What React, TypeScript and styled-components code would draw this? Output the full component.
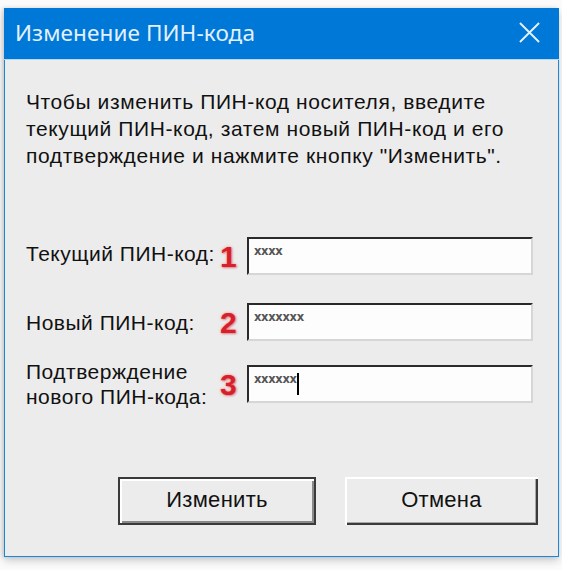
import React from "react";
import styled, { createGlobalStyle } from "styled-components";

const Global = createGlobalStyle`
  html, body { margin: 0; padding: 0; background: #fbfbfb; }
  body { width: 562px; height: 570px; overflow: hidden; }
`;

const Page = styled.div`
  width: 562px;
  height: 570px;
  padding: 8px 0 0 4px;
  box-sizing: border-box;
`;

const Window = styled.div`
  width: 555px;
  height: 549px;
  box-sizing: border-box;
  border: 1px solid #1a86d8;
  border-top: none;
  background: #ececec;
  display: flex;
  flex-direction: column;
  box-shadow: 0 4px 8px rgba(0, 0, 0, 0.18), -2px 0 4px rgba(0, 0, 0, 0.12);
`;

const TitleBar = styled.div`
  height: 52px;
  margin: 0 -1px;
  background: #0078d7;
  display: flex;
  align-items: center;
  justify-content: space-between;
  padding: 0 14px 2px 11px;
  border-bottom: 1px solid #b9d8f0;
  box-sizing: border-box;
  flex-shrink: 0;
`;

const Title = styled.div`
  font-family: "Noto Sans", "Open Sans", sans-serif;
  font-size: 22.5px;
  color: #e2f1fd;
  letter-spacing: 0.1px;
`;

const Close = styled.div`
  width: 32px;
  height: 32px;
  display: flex;
  align-items: center;
  justify-content: center;
`;

const Body = styled.div`
  flex: 1;
  display: flex;
  flex-direction: column;
  padding: 28px 20px 0 21px;
  font-family: "Liberation Sans", Arial, sans-serif;
  color: #111;
`;

const Intro = styled.p`
  margin: 0;
  font-size: 21px;
  line-height: 27px;
  letter-spacing: 0.6px;
`;

const Form = styled.div`
  margin-top: 68px;
  display: flex;
  flex-direction: column;
`;

const Row = styled.div<{ $gap: number }>`
  display: grid;
  grid-template-columns: 193px 28px 286px;
  align-items: center;
  margin-top: ${(p) => p.$gap}px;
`;

const Label = styled.div<{ $shift?: number }>`
  font-size: 21px;
  line-height: 25px;
  letter-spacing: 0.5px;
  position: relative;
  top: ${(p) => p.$shift ?? 0}px;
`;

const Num = styled.div`
  font-family: "Liberation Sans", Arial, sans-serif;
  font-weight: 700;
  font-size: 30px;
  line-height: 28px;
  color: #d7202b;
  text-shadow: 0 0 3px rgba(255, 120, 120, 0.8), 1px 1px 2px rgba(120, 0, 0, 0.35);
  padding-left: 1px;
  position: relative;
  top: 1px;
`;

const Input = styled.div`
  height: 38px;
  box-sizing: border-box;
  background: #fdfdfd;
  border-top: 2px solid #2a2a2a;
  border-left: 2px solid #2a2a2a;
  border-right: 2px solid #d6d6d6;
  border-bottom: 2px solid #d6d6d6;
  display: flex;
  align-items: flex-start;
  padding: 6px 0 0 5px;
`;

const Mask = styled.span`
  font-family: "DejaVu Sans", sans-serif;
  font-size: 11.5px;
  font-weight: 700;
  color: #555;
  letter-spacing: -0.3px;
  line-height: 12px;
`;

const Caret = styled.span`
  display: inline-block;
  width: 2px;
  height: 22px;
  background: #000;
`;

const Buttons = styled.div`
  margin-top: 68px;
  display: flex;
  justify-content: flex-end;
  gap: 29px;
`;

const Button = styled.div<{ $default?: boolean; $w: number }>`
  width: ${(p) => p.$w}px;
  height: 48px;
  box-sizing: border-box;
  display: flex;
  align-items: center;
  justify-content: center;
  font-family: "Liberation Sans", Arial, sans-serif;
  font-size: 22px;
  letter-spacing: 0.3px;
  color: #111;
  background: #ececec;
  border: ${(p) => (p.$default ? "2px solid #3a3a3a" : "none")};
  box-shadow: ${(p) =>
    p.$default
      ? "inset 2px 2px 0 #fff, inset -2px -2px 0 #8a8a8a"
      : "inset 2px 2px 0 #fff, inset -2px -2px 0 #3a3a3a, inset -3px -3px 0 #a8a8a8"};
  padding-bottom: 2px;
`;

export default function App() {
  return (
    <>
      <Global />
      <Page>
        <Window>
          <TitleBar>
            <Title>Изменение ПИН-кода</Title>
            <Close>
              <svg width="21" height="21" viewBox="0 0 22 22">
                <path d="M1 1 L21 21 M21 1 L1 21" stroke="#e2f1fd" strokeWidth="2" />
              </svg>
            </Close>
          </TitleBar>
          <Body>
            <Intro>
              Чтобы изменить ПИН-код носителя, введите
              <br />
              текущий ПИН-код, затем новый ПИН-код и его
              <br />
              подтверждение и нажмите кнопку "Изменить".
            </Intro>
            <Form>
              <Row $gap={0}>
                <Label $shift={-3}>Текущий ПИН-код:</Label>
                <Num>1</Num>
                <Input>
                  <Mask>xxxx</Mask>
                </Input>
              </Row>
              <Row $gap={28}>
                <Label>Новый ПИН-код:</Label>
                <Num>2</Num>
                <Input>
                  <Mask>xxxxxxx</Mask>
                </Input>
              </Row>
              <Row $gap={18}>
                <Label>
                  Подтверждение
                  <br />
                  нового ПИН-кода:
                </Label>
                <Num>3</Num>
                <Input>
                  <Mask>xxxxxx</Mask>
                  <Caret />
                </Input>
              </Row>
            </Form>
            <Buttons>
              <Button $default $w={198}>Изменить</Button>
              <Button $w={193}>Отмена</Button>
            </Buttons>
          </Body>
        </Window>
      </Page>
    </>
  );
}
